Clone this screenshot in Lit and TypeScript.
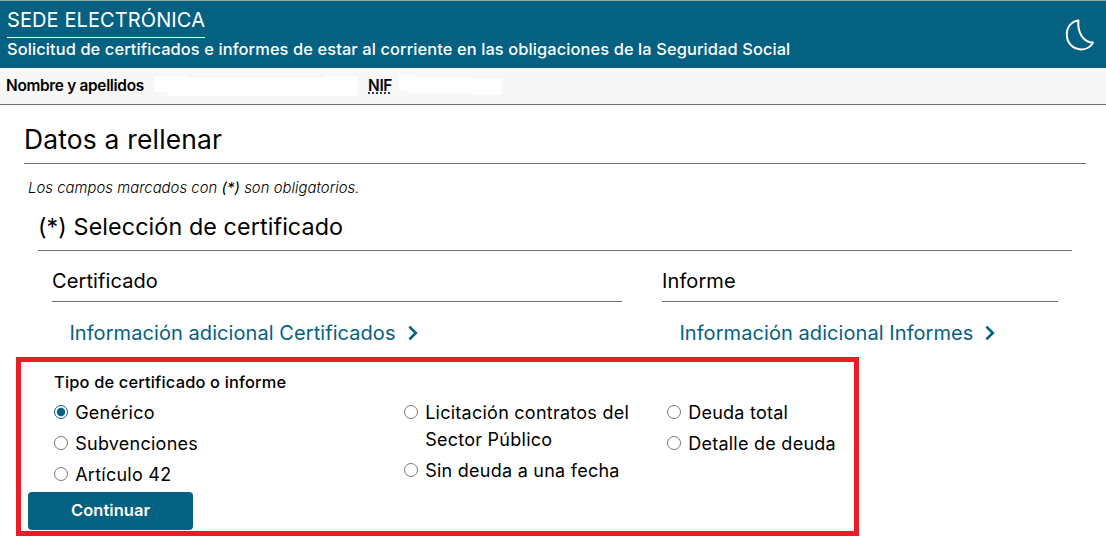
import { LitElement, html, css } from "lit";
import { customElement, property, state } from "lit/decorators.js";

@customElement("info-link")
export class InfoLink extends LitElement {
  static styles = css`
    :host { display: block; }
    .link {
      display: inline-flex;
      align-items: center;
      gap: 11px;
      color: #046182;
      font-size: 20px;
      line-height: 28px;
      letter-spacing: 0.07px;
      text-decoration: none;
      white-space: nowrap;
    }
    .chevron { display: block; margin-bottom: 1px; }
  `;
  @property() label = "";
  render() {
    return html`<a class="link" href="#">
      <span>${this.label}</span>
      <svg class="chevron" width="12" height="16" viewBox="0 0 12 16" fill="none" stroke="#046182" stroke-width="2.6">
        <path d="M2.400 1.600 L8.800 8 L2.400 14.400" />
      </svg>
    </a>`;
  }
}

@customElement("app-root")
export class AppRoot extends LitElement {
  static styles = css`
    :host {
      display: block;
      position: relative;
      height: 538px;
      overflow: hidden;
      background: #fff;
      color: #000;
      font-family: Inter, "Liberation Sans", sans-serif;
    }
    .header {
      display: flex;
      justify-content: space-between;
      box-sizing: border-box;
      height: 68px;
      padding: 7px 10px 0 7px;
      border-top: 1px solid #8fae98;
      background: #046182;
      color: #fff;
    }
    .brand {
      display: inline-block;
      padding-bottom: 5px;
      border-bottom: 1px solid #fff;
      font-size: 20px;
      line-height: 24px;
      letter-spacing: 0.1px;
    }
    .subtitle {
      margin-top: 1px;
      font-size: 16.4px;
      font-weight: 500;
      line-height: 20px;
      letter-spacing: 0.11px;
    }
    .moon { display: block; margin-top: 10px; }
    .user {
      display: flex;
      align-items: center;
      box-sizing: border-box;
      height: 37px;
      padding-left: 6px;
      border-bottom: 1px solid #6f6f6f;
      background: #f7f7f7;
      font-size: 15.4px;
      font-weight: 600;
      line-height: 20px;
      letter-spacing: -0.3px;
    }
    .name { width: 148px; }
    .redacted { height: 20px; background: #fff; }
    .redacted-name {
      width: 204px;
      margin-right: 10px;
      clip-path: polygon(0 0, 34px 0, 34px 2px, 171px 2px, 171px 0, 100% 0, 100% 18px, 202px 18px, 202px 100%, 14px 100%, 14px 16px, 0 16px);
    }
    .redacted-nif {
      width: 103px;
      margin: 0 0 2px 7px;
      clip-path: polygon(0 0, 16px 0, 16px 2px, 73px 2px, 73px 4px, 100% 4px, 100% 100%, 73px 100%, 73px 18px, 9px 18px, 9px 16px, 0 16px);
    }
    .nif { text-decoration: underline dotted; text-underline-offset: 2px; }
    .content { padding: 19px 20px 0 24px; }
    .title {
      margin: 0;
      padding-bottom: 9px;
      border-bottom: 1px solid #6f6f6f;
      font-size: 26.4px;
      font-weight: 400;
      line-height: 30px;
      letter-spacing: 0.2px;
    }
    .note {
      margin: 14px 0 0 4px;
      font-size: 14.8px;
      font-style: italic;
      font-weight: 300;
      line-height: 20px;
      letter-spacing: 0.06px;
    }
    .section { margin: 14px 14px 0 14px; }
    .section-title {
      margin: 0;
      padding-bottom: 8px;
      border-bottom: 1px solid #6f6f6f;
      font-size: 23.3px;
      font-weight: 400;
      line-height: 30px;
      letter-spacing: 0.1px;
    }
    .columns {
      display: grid;
      grid-template-columns: 570px 396px;
      column-gap: 40px;
      padding: 18px 0 0 14px;
    }
    .column-title {
      margin: 0 0 17px;
      padding-bottom: 8px;
      border-bottom: 1px solid #6f6f6f;
      font-size: 20px;
      font-weight: 400;
      line-height: 24px;
      letter-spacing: 0.1px;
    }
    .column-link { padding-left: 17.4px; }
    .form { padding-left: 4px; }
    .group { margin: 0; padding: 0 0 0 26px; border: 0; }
    .legend {
      padding: 0;
      margin-top: 25px;
      font-size: 16.4px;
      font-weight: 500;
      line-height: 20px;
      letter-spacing: 0.18px;
    }
    .options {
      display: grid;
      grid-template-columns: 350px 263px 200px;
      align-items: start;
      padding-top: 7px;
    }
    .stack { display: grid; gap: 4px; }
    .option {
      display: flex;
      align-items: flex-start;
      font-size: 18px;
      line-height: 27px;
      letter-spacing: 0.25px;
    }
    .radio {
      flex: none;
      width: 14px;
      height: 14px;
      margin: 6px 7.2px 0 0;
      accent-color: #046182;
    }
    .option-text { max-width: 215px; }
    .submit {
      display: block;
      width: 165px;
      height: 38px;
      margin-top: 4px;
      padding: 0 0 2px;
      border: 0;
      border-radius: 4px;
      background: #046182;
      color: #fff;
      font: 600 16.5px Inter, sans-serif;
      letter-spacing: 0.05px;
    }
    .highlight {
      position: absolute;
      left: 16px;
      top: 357px;
      box-sizing: border-box;
      width: 843px;
      height: 179px;
      border: 5px solid #ed1c24;
      pointer-events: none;
    }
  `;

  @state() private selected = "Genérico";

  private groups = [
    ["Genérico", "Subvenciones", "Artículo 42"],
    ["Licitación contratos del Sector Público", "Sin deuda a una fecha"],
    ["Deuda total", "Detalle de deuda"],
  ];

  render() {
    return html`
      <header class="header">
        <div>
          <div class="brand">SEDE ELECTRÓNICA</div>
          <div class="subtitle">Solicitud de certificados e informes de estar al corriente en las obligaciones de la Seguridad Social</div>
        </div>
        <svg class="moon" width="32" height="34" viewBox="0 0 32 34" fill="none" stroke="#fff" stroke-width="2" stroke-linejoin="round">
          <path d="M14.400 2.400 C7.500 3.200 2.800 9 2.800 16.500 C2.800 25.500 9.500 31.400 17.200 31.400 C22.500 31.400 26.800 28.700 29 24.600 C20 24.400 13.200 15.500 14.400 2.400 Z" />
        </svg>
      </header>
      <div class="user">
        <span class="name">Nombre y apellidos</span>
        <span class="redacted redacted-name"></span>
        <span class="nif">NIF</span>
        <span class="redacted redacted-nif"></span>
      </div>
      <main class="content">
        <h1 class="title">Datos a rellenar</h1>
        <p class="note">Los campos marcados con <b>(*)</b> son obligatorios.</p>
        <section class="section">
          <h2 class="section-title">(*) Selección de certificado</h2>
          <div class="columns">
            <div>
              <h3 class="column-title">Certificado</h3>
              <info-link class="column-link" label="Información adicional Certificados"></info-link>
            </div>
            <div>
              <h3 class="column-title">Informe</h3>
              <info-link class="column-link" label="Información adicional Informes"></info-link>
            </div>
          </div>
        </section>
        <form class="form">
          <div class="group" role="radiogroup">
            <div class="legend">Tipo de certificado o informe</div>
            <div class="options">
              ${this.groups.map(
                (group) => html`<div class="stack">
                  ${group.map(
                    (name) => html`<label class="option">
                      <input class="radio" type="radio" name="tipo" .checked=${this.selected === name}
                        @change=${() => (this.selected = name)} />
                      <span class="option-text">${name}</span>
                    </label>`
                  )}
                </div>`
              )}
            </div>
          </div>
          <button class="submit" type="button">Continuar</button>
        </form>
      </main>
      <div class="highlight"></div>
    `;
  }
}
